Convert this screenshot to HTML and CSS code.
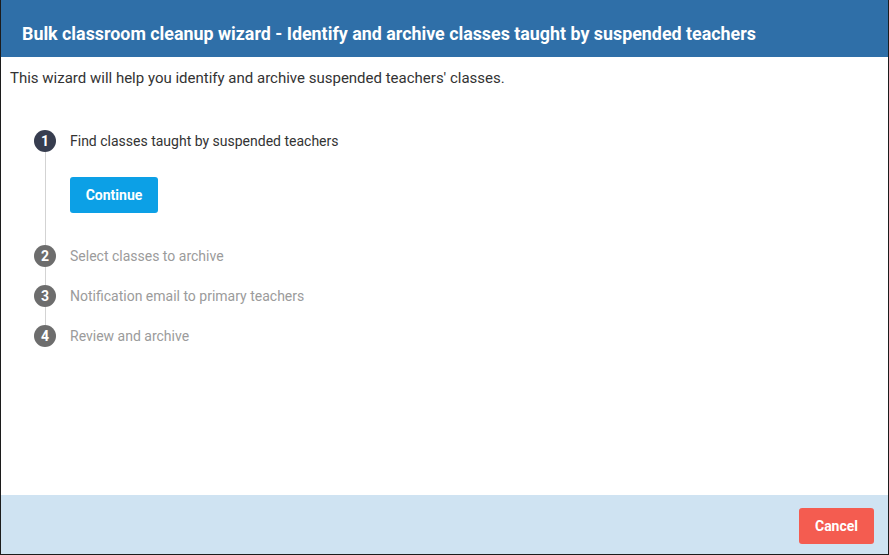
FILE: index.html
```html
<!DOCTYPE html>
<html>
<head>
<meta charset="utf-8">
<link rel="stylesheet" href="styles.css">
</head>
<body>
<div class="wizard">
  <header class="wizard-header">
    <h1 class="wizard-title">Bulk classroom cleanup wizard - Identify and archive classes taught by suspended teachers</h1>
  </header>
  <main class="wizard-body">
    <p class="intro">This wizard will help you identify and archive suspended teachers' classes.</p>
    <ol class="steps">
      <li class="step step-active">
        <div class="step-rail"><span class="step-num">1</span><span class="step-line"></span></div>
        <div class="step-content step-content-first">
          <div class="step-label">Find classes taught by suspended teachers</div>
          <button class="btn btn-primary">Continue</button>
        </div>
      </li>
      <li class="step">
        <div class="step-rail"><span class="step-num">2</span><span class="step-line"></span></div>
        <div class="step-content"><div class="step-label">Select classes to archive</div></div>
      </li>
      <li class="step">
        <div class="step-rail"><span class="step-num">3</span><span class="step-line"></span></div>
        <div class="step-content"><div class="step-label">Notification email to primary teachers</div></div>
      </li>
      <li class="step step-last">
        <div class="step-rail"><span class="step-num">4</span></div>
        <div class="step-content"><div class="step-label">Review and archive</div></div>
      </li>
    </ol>
  </main>
  <footer class="wizard-footer">
    <button class="btn btn-danger">Cancel</button>
  </footer>
</div>
</body>
</html>
```

FILE: styles.css
```css
* { box-sizing: border-box; }
html, body { margin: 0; padding: 0; background: #fff; }
body { font-family: Roboto, "Liberation Sans", Arial, sans-serif; }

.wizard {
  width: 889px;
  height: 555px;
  display: flex;
  flex-direction: column;
  border-left: 1px solid #1c1c1c;
  border-right: 1px solid #1c1c1c;
  border-bottom: 1px solid #1c1c1c;
}

.wizard-header {
  height: 57px;
  flex: none;
  background: #2f6fa8;
  display: flex;
  align-items: center;
  padding: 11px 0 0 21px;
}
.wizard-title {
  margin: 0;
  color: #fff;
  font-size: 17.85px;
  font-weight: 700;
  line-height: 22px;
}

.wizard-body {
  flex: 1;
  padding: 11px 9px 0 9px;
}
.intro {
  margin: 0;
  font-size: 15px;
  line-height: 20px;
  color: #333;
}

.steps {
  list-style: none;
  margin: 42px 0 0 0;
  padding: 0 0 0 24px;
}
.step {
  display: flex;
}
.step-rail {
  width: 22px;
  flex: none;
  display: flex;
  flex-direction: column;
  align-items: center;
}
.step-num {
  width: 22px;
  height: 22px;
  border-radius: 50%;
  background: #6d6d6d;
  color: #fff;
  font-size: 14px;
  font-weight: 700;
  line-height: 22px;
  text-align: center;
  flex: none;
}
.step-active .step-num { background: #373d4f; }
.step-line {
  flex: 1;
  width: 1px;
  background: #d3d3d3;
}
.step-content {
  padding: 0 0 18px 14px;
}
.step-content-first { padding-bottom: 32px; }
.step-last .step-content { padding-bottom: 0; }
.step-label {
  font-size: 14px;
  line-height: 22px;
  color: #9b9b9b;
}
.step-active .step-label { color: #333; }

.btn {
  border: none;
  border-radius: 3px;
  height: 36px;
  padding: 0;
  color: #fff;
  font-family: Roboto, "Liberation Sans", Arial, sans-serif;
  font-size: 14px;
  font-weight: 700;
  cursor: pointer;
}
.btn-primary {
  margin-top: 25px;
  width: 88px;
  background: #0ca0e6;
}
.btn-danger {
  width: 75px;
  background: #f45c50;
}

.wizard-footer {
  height: 59px;
  flex: none;
  background: #cfe3f2;
  display: flex;
  justify-content: flex-end;
  align-items: flex-start;
  padding: 13px 14px 0 0;
}
```
